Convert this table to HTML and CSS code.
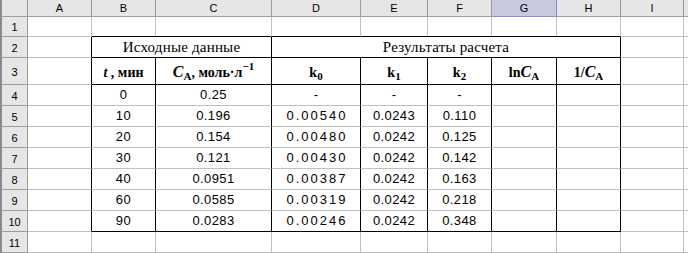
FILE: index.html
```html
<!DOCTYPE html>
<html>
<head>
<meta charset="utf-8">
<link rel="stylesheet" href="styles.css">
</head>
<body>
<div class="sheet">
  <div class="c corner"></div>
  <div class="c ch">A</div><div class="c ch">B</div><div class="c ch">C</div><div class="c ch">D</div><div class="c ch">E</div><div class="c ch">F</div><div class="c ch sel">G</div><div class="c ch">H</div><div class="c ch">I</div><div class="c ch last"></div>

  <div class="c rh">1</div>
  <div class="c"></div><div class="c bb"></div><div class="c bb"></div><div class="c bb"></div><div class="c bb"></div><div class="c bb"></div><div class="c bb"></div><div class="c bb"></div><div class="c"></div><div class="c last"></div>

  <div class="c rh">2</div>
  <div class="c br"></div>
  <div class="c bb br span2 title">Исходные данные</div>
  <div class="c bb br span5 title">Результаты расчета</div>
  <div class="c"></div><div class="c last"></div>

  <div class="c rh h3">3</div>
  <div class="c br"></div>
  <div class="c bb br hd"><span><i>t</i> , мин</span></div>
  <div class="c bb br hd"><span><i class="big">C</i><sub>A</sub>, моль·л<sup>−1</sup></span></div>
  <div class="c bb br hd"><span>k<sub>0</sub></span></div>
  <div class="c bb br hd"><span>k<sub>1</sub></span></div>
  <div class="c bb br hd"><span>k<sub>2</sub></span></div>
  <div class="c bb br hd"><span>ln<i class="big">C</i><sub>A</sub></span></div>
  <div class="c bb br hd"><span>1/<i class="big">C</i><sub>A</sub></span></div>
  <div class="c"></div><div class="c last"></div>

  <div class="c rh">4</div>
  <div class="c br"></div><div class="c br n">0</div><div class="c br n">0.25</div><div class="c br n d">-</div><div class="c br n">-</div><div class="c br n">-</div><div class="c br"></div><div class="c br"></div><div class="c"></div><div class="c last"></div>

  <div class="c rh">5</div>
  <div class="c br"></div><div class="c br n">10</div><div class="c br n">0.196</div><div class="c br n d">0.00540</div><div class="c br n">0.0243</div><div class="c br n">0.110</div><div class="c br"></div><div class="c br"></div><div class="c"></div><div class="c last"></div>

  <div class="c rh">6</div>
  <div class="c br"></div><div class="c br n">20</div><div class="c br n">0.154</div><div class="c br n d">0.00480</div><div class="c br n">0.0242</div><div class="c br n">0.125</div><div class="c br"></div><div class="c br"></div><div class="c"></div><div class="c last"></div>

  <div class="c rh">7</div>
  <div class="c br"></div><div class="c br n">30</div><div class="c br n">0.121</div><div class="c br n d">0.00430</div><div class="c br n">0.0242</div><div class="c br n">0.142</div><div class="c br"></div><div class="c br"></div><div class="c"></div><div class="c last"></div>

  <div class="c rh">8</div>
  <div class="c br"></div><div class="c br n">40</div><div class="c br n">0.0951</div><div class="c br n d">0.00387</div><div class="c br n">0.0242</div><div class="c br n">0.163</div><div class="c br"></div><div class="c br"></div><div class="c"></div><div class="c last"></div>

  <div class="c rh">9</div>
  <div class="c br"></div><div class="c br n">60</div><div class="c br n">0.0585</div><div class="c br n d">0.00319</div><div class="c br n">0.0242</div><div class="c br n">0.218</div><div class="c br"></div><div class="c br"></div><div class="c"></div><div class="c last"></div>

  <div class="c rh">10</div>
  <div class="c br"></div><div class="c br bb n">90</div><div class="c br bb n">0.0283</div><div class="c br bb n d">0.00246</div><div class="c br bb n">0.0242</div><div class="c br bb n">0.348</div><div class="c br bb"></div><div class="c br bb"></div><div class="c"></div><div class="c last"></div>

  <div class="c rh">11</div>
  <div class="c"></div><div class="c"></div><div class="c"></div><div class="c"></div><div class="c"></div><div class="c"></div><div class="c"></div><div class="c"></div><div class="c"></div><div class="c last"></div>
</div>
</body>
</html>
```

FILE: styles.css
```css
html, body {
  margin: 0;
  padding: 0;
  background: #ffffff;
}

.sheet {
  display: grid;
  width: 688px;
  height: 253px;
  overflow: hidden;
  grid-template-columns: 28px 64px 64px 116px 89px 67px 64px 65px 64px 63px 1fr;
  grid-template-rows: 17px 20px 21px 27px repeat(8, 21px);
  font-family: "Liberation Sans", Arial, sans-serif;
  font-size: 13px;
  color: #000;
}

.c {
  box-sizing: border-box;
  border-right: 1px solid #c0c0c0;
  border-bottom: 1px solid #c0c0c0;
  min-width: 0;
  overflow: visible;
  white-space: nowrap;
}

.c.last {
  border-right: none;
}

.corner {
  background: #e6e6e6;
  border-right: 1px solid #9d9d9d;
  border-bottom: 1px solid #9d9d9d;
  border-left: 2px solid #8c8c8c;
}

.ch {
  background: #e6e6e6;
  border-right: 1px solid #9d9d9d;
  border-bottom: 1px solid #9d9d9d;
  font-size: 11px;
  text-align: center;
  line-height: 16px;
}

.ch.sel {
  background: #c9c9e0;
  border-right: 1px solid #8a8ae0;
  border-bottom: 1px solid #8a8ae0;
}

.rh {
  background: #e6e6e6;
  border-right: 1px solid #9d9d9d;
  border-bottom: 1px solid #9d9d9d;
  border-left: 2px solid #8c8c8c;
  font-size: 11px;
  display: flex;
  align-items: center;
  justify-content: center;
  padding-top: 1px;
}

.br {
  border-right-color: #000;
}

.bb {
  border-bottom-color: #000;
}

.span2 {
  grid-column: span 2;
}

.span5 {
  grid-column: span 5;
}

.title {
  font-family: "Liberation Serif", "Times New Roman", serif;
  font-size: 15px;
  text-align: center;
  line-height: 20px;
  letter-spacing: 0.2px;
}

.hd {
  display: flex;
  align-items: flex-end;
  justify-content: center;
  font-family: "Liberation Serif", "Times New Roman", serif;
  font-weight: bold;
  font-size: 14px;
  padding-bottom: 3px;
}

.hd span {
  line-height: 16px;
}

.hd i {
  font-style: italic;
}

.hd .big {
  font-size: 16px;
}

.hd sub {
  font-size: 11px;
  vertical-align: -3px;
  line-height: 0;
}

.hd sup {
  font-size: 11px;
  vertical-align: 7px;
  line-height: 0;
}

.n {
  display: flex;
  align-items: flex-end;
  justify-content: center;
  padding-bottom: 2px;
  line-height: 16px;
  letter-spacing: 0.4px;
}

.n.d {
  letter-spacing: 2px;
  padding-left: 2px;
}
```
